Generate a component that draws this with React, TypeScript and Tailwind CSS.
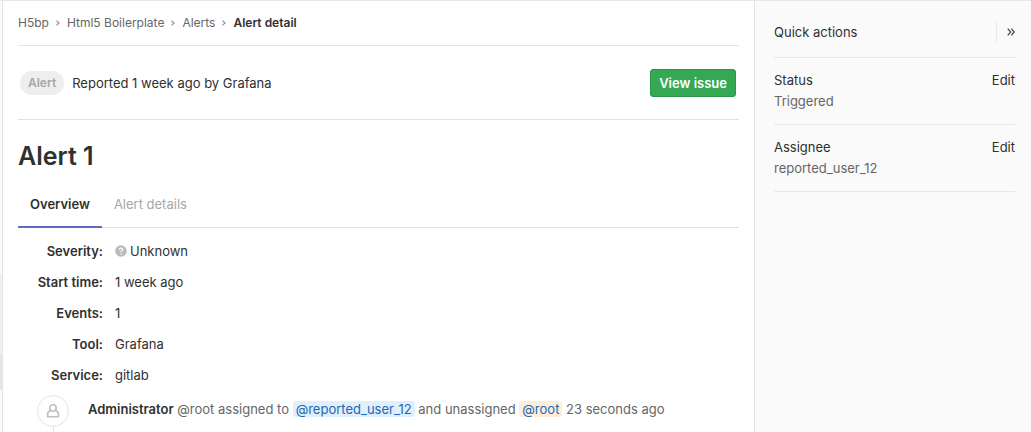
import type { ReactNode } from "react";

const crumbs = ["H5bp", "Html5 Boilerplate", "Alerts"];

const details: { label: string; value: ReactNode }[] = [
  {
    label: "Severity:",
    value: (
      <span className="flex items-center gap-[3px]">
        <QuestionIcon />
        Unknown
      </span>
    ),
  },
  { label: "Start time:", value: "1 week ago" },
  { label: "Events:", value: "1" },
  { label: "Tool:", value: "Grafana" },
  { label: "Service:", value: "gitlab" },
];

const fields = [
  { label: "Status", value: "Triggered" },
  { label: "Assignee", value: "reported_user_12" },
];

function QuestionIcon() {
  return (
    <svg viewBox="0 0 12 12" className="size-3 shrink-0" aria-hidden="true">
      <circle cx="6" cy="6" r="5.8" fill="#bababa" />
      <path d="M4.3 4.7a1.7 1.6 0 1 1 2.4 1.4q-.7.3-.7 1" fill="none" stroke="#fff" strokeWidth="1.2" />
      <circle cx="6" cy="8.9" r=".75" fill="#fff" />
    </svg>
  );
}

function ChevronIcon() {
  return (
    <svg viewBox="0 0 6 8" className="h-2 w-[6px]" fill="none" stroke="#8c8c8c" aria-hidden="true">
      <path d="M1.5 1.7 4 4 1.5 6.3" strokeWidth="1.1" />
    </svg>
  );
}

function UserIcon() {
  return (
    <svg viewBox="0 0 14 16" className="h-4 w-[14px]" fill="none" stroke="#bfbfbf" strokeWidth="1.6" aria-hidden="true">
      <circle cx="7" cy="5" r="3.2" />
      <path d="M4.500 7.500C2.400 8.200 1.600 9.600 1.600 11.300v2.500h10.800v-2.500c0-1.700-.8-3.100-2.900-3.800" strokeLinejoin="round" />
    </svg>
  );
}

export default function App() {
  return (
    <div className="flex min-h-screen border-t border-[#e8e8e8] bg-white font-['Inter','Liberation_Sans',sans-serif] text-[13px] leading-5 text-[#303030]">
      <div className="flex w-[3px] shrink-0 flex-col border-r border-[#e3e3e3] bg-[#fafafa] pt-[273px]" aria-hidden="true">
        <div className="h-20 bg-[#f0f0f0]" />
        <div className="h-9 bg-[#e6e6e6]" />
      </div>

      <main className="min-w-0 flex-1 pr-[15px] pl-[15px]">
        <nav aria-label="Breadcrumb" className="flex h-[45px] items-center border-b border-[#e5e5e5] text-[12px]">
          <ol className="flex items-center">
            {crumbs.map((crumb) => (
              <li key={crumb} className="flex items-center">
                <a href="#" className="text-[#666]">{crumb}</a>
                <span className="mx-[6px]"><ChevronIcon /></span>
              </li>
            ))}
            <li><a href="#" aria-current="page" className="font-semibold">Alert detail</a></li>
          </ol>
        </nav>

        <header className="flex h-[74px] items-center justify-between border-b border-[#dfdfdf] pr-[3px] pl-[2px]">
          <div className="flex items-center gap-2">
            <span className="rounded-full bg-[#eee] px-2 py-[2px] text-[12px] font-semibold text-[#a7a7a7]">Alert</span>
            <span>Reported 1 week ago by Grafana</span>
          </div>
          <button type="button" className="h-7 rounded-[3px] border border-[#2b9549] bg-[#34a853] px-2 font-semibold whitespace-nowrap text-white">
            View issue
          </button>
        </header>

        <h1 className="pt-5 text-[25px] leading-8 font-semibold">Alert 1</h1>

        <div role="tablist" className="mt-3 flex border-b border-[#dfdfdf]">
          <button type="button" role="tab" aria-selected="true" className="-mb-px h-11 border-b-2 border-[#6666c4] px-3 pb-[2px] font-semibold">
            Overview
          </button>
          <button type="button" role="tab" aria-selected="false" className="-mb-px h-11 border-b-2 border-transparent px-3 pb-[2px] text-[#a7a7a7]">
            Alert details
          </button>
        </div>

        <dl className="pt-[7px]">
          {details.map(({ label, value }) => (
            <div key={label} className="flex h-[31px] items-center gap-3">
              <dt className="w-[85px] shrink-0 text-right font-semibold">{label}</dt>
              <dd>{value}</dd>
            </div>
          ))}
        </dl>

        <div className="flex gap-[19px] pt-[5px] pl-[19px]">
          <div className="flex w-8 shrink-0 flex-col items-center">
            <span className="flex size-8 items-center justify-center rounded-full border border-[#e3e3e3]">
              <UserIcon />
            </span>
            <span className="h-[5px] w-px bg-[#e3e3e3]" />
          </div>
          <p className="pt-1 text-[#666]">
            <a href="#" className="font-semibold text-[#303030]">Administrator</a> @root assigned to{" "}
            <a href="#" className="rounded-[3px] bg-[#e1effc] px-[3px] text-[#1b69b6]">@reported_user_12</a> and unassigned{" "}
            <a href="#" className="rounded-[3px] bg-[#fdeedb] px-[3px] text-[#1b69b6]">@root</a> 23 seconds ago
          </p>
        </div>
      </main>

      <aside className="w-[277px] shrink-0 border-l border-[#e3e3e3] bg-[#fafafa] pr-4 pl-[19px]">
        <div className="flex h-[57px] items-center justify-between border-b border-[#e8e8e8] pt-[6px]">
          <h2>Quick actions</h2>
          <button type="button" aria-label="Collapse sidebar" className="flex h-5 items-center border-l border-[#e8e8e8] pl-[10px]">
            <svg viewBox="0 0 8 8" className="size-2" fill="none" stroke="#444" strokeWidth="1.2" aria-hidden="true">
              <path d="M.7.700 3.700 4 .7 7.300M4.200.700 7.200 4 4.200 7.300" />
            </svg>
          </button>
        </div>
        {fields.map(({ label, value }) => (
          <section key={label} className="border-b border-[#e8e8e8] py-3 leading-[21px]">
            <div className="flex justify-between">
              <h3>{label}</h3>
              <button type="button" aria-label={`Edit ${label}`}>Edit</button>
            </div>
            <p className="text-[#666]">{value}</p>
          </section>
        ))}
      </aside>
    </div>
  );
}
